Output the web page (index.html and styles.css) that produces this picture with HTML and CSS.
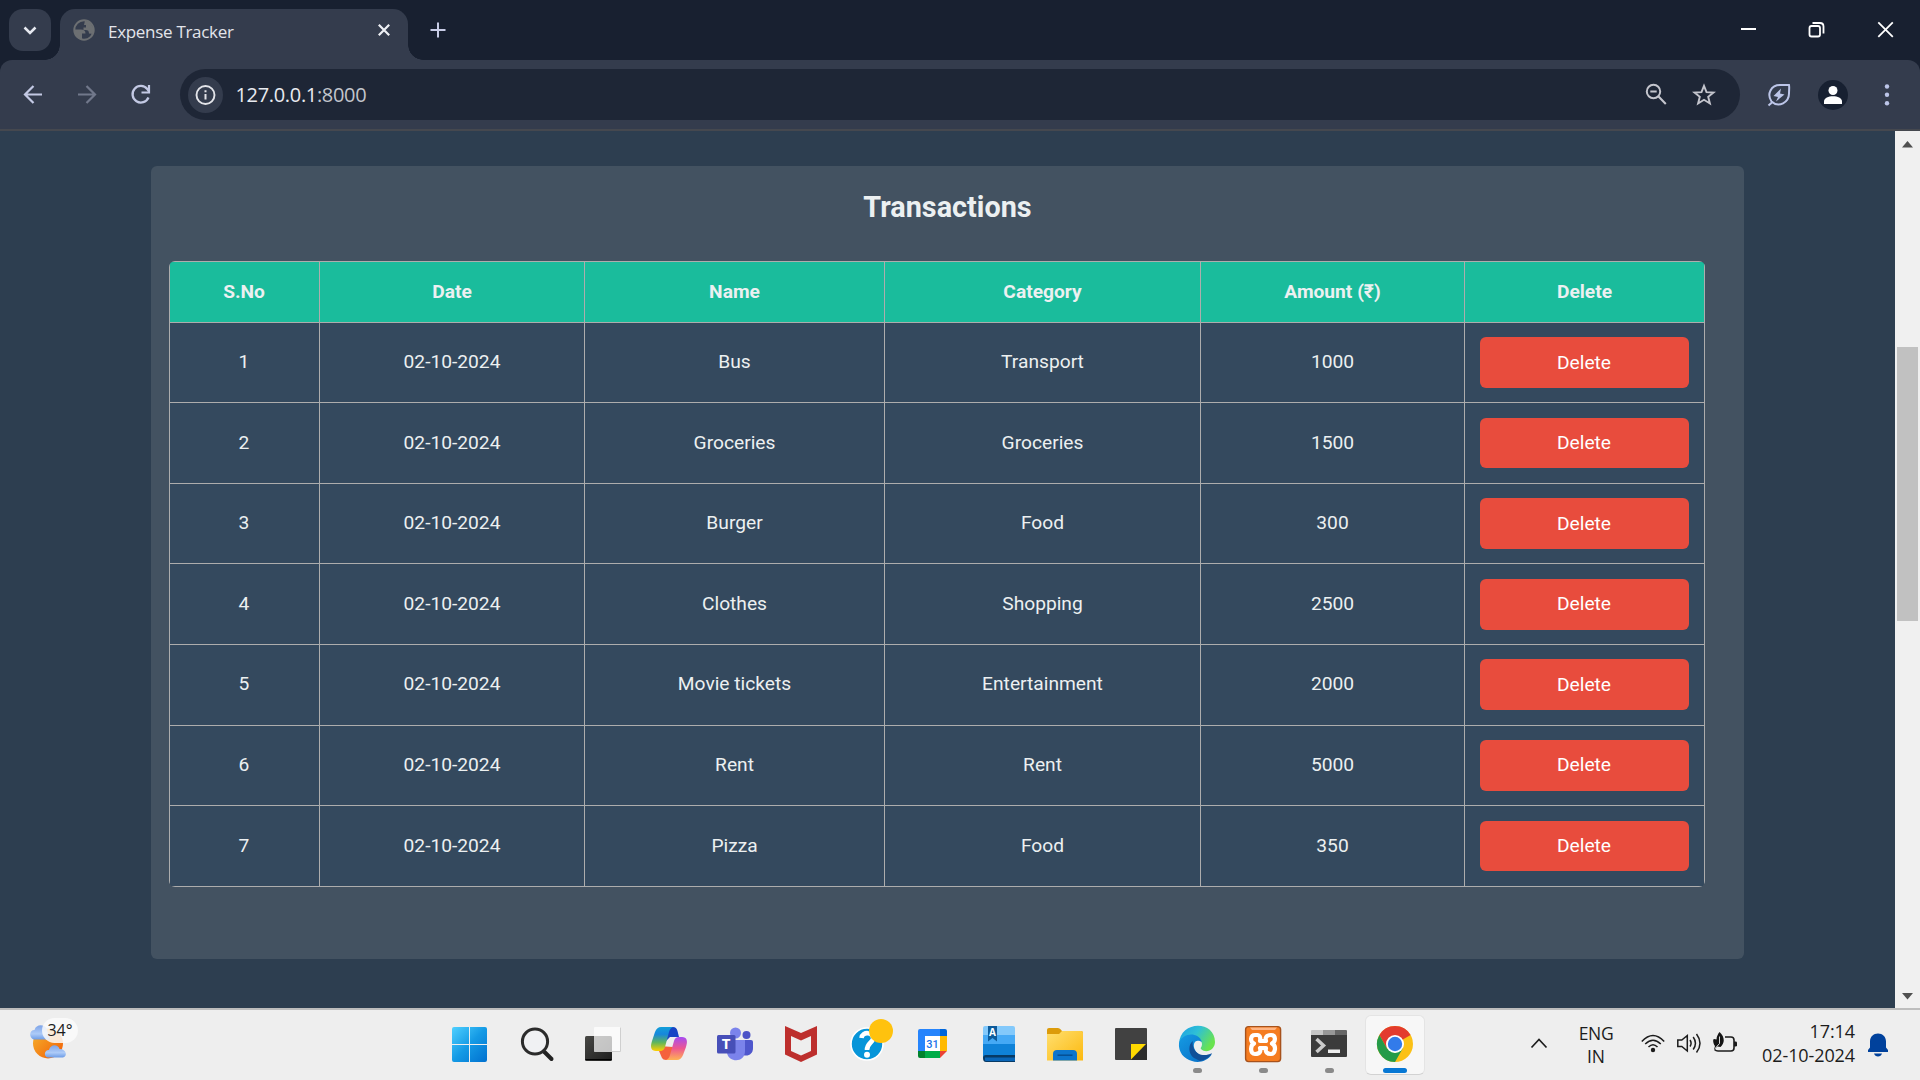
FILE: index.html
```html
<!DOCTYPE html>
<html lang="en">
<head>
<meta charset="utf-8">
<title>Expense Tracker</title>
<link rel="stylesheet" href="styles.css">
</head>
<body>
<div class="screen">
  <header class="tabstrip">
    <button class="tab-search"><svg width="42" height="42"><path d="M15.500 18.500l5.500 5.500l5.500-5.500" fill="none" stroke="#e6e9f0" stroke-width="2.500"/></svg></button>
    <div class="tab">
      <svg class="favicon" width="22" height="22" viewBox="0 0 22 22"><circle cx="11" cy="11" r="9.700" fill="none" stroke="#6c6f72" stroke-width="2"/><path d="M1.500 10.500H8c3 0 4.500 1.500 4.500 4H9v6C4 20 1 16 1.500 10.500zM12 1.500l5 2 4 6.500-1 5-4-.5c0-2.500-1-3.500-3.500-3.500h-2V8.500H13V6h-2z" fill="#6c6f72"/></svg>
      <span class="tab-title">Expense Tracker</span>
      <svg class="tab-close" width="12" height="12"><path d="M.8.8l10.400 10.400M11.200.8L.8 11.200" stroke="#eef0f5" stroke-width="2.200"/></svg>
    </div>
    <svg class="new-tab" width="16" height="16"><path d="M8 .5v15M.5 8h15" stroke="#c8cce6" stroke-width="2"/></svg>
    <div class="window-controls">
      <svg width="69" height="60"><path d="M28 29h15" stroke="#fff" stroke-width="2"/></svg>
      <svg width="69" height="60"><rect x="27.500" y="26" width="10.500" height="10.500" rx="2" fill="none" stroke="#fff" stroke-width="1.800"/><path d="M30.500 23h7.500q3.500 0 3.500 3.500v7" fill="none" stroke="#fff" stroke-width="1.800"/></svg>
      <svg width="69" height="60"><path d="M27.300 22.300l14.500 14.500M41.800 22.300L27.300 36.800" stroke="#fff" stroke-width="1.800"/></svg>
    </div>
  </header>
  <nav class="toolbar-wrap">
    <div class="toolbar">
      <svg class="nav-icon" width="54" height="69"><path d="M42 34.500H25.500M33.500 26l-8.500 8.500 8.500 8.500" fill="none" stroke="#c3c9e4" stroke-width="2.200"/></svg>
      <svg class="nav-icon" width="54" height="69"><path d="M24 34.500h16.500M32.500 26l8.500 8.500-8.500 8.500" fill="none" stroke="#71788b" stroke-width="2.200"/></svg>
      <svg class="reload" width="72" height="69"><path d="M40.500 37.500a8.300 8.300 0 1 1-1.200-8.500l1.500 2" fill="none" stroke="#c3c9e4" stroke-width="2.300"/><path d="M41 25v7.500h-7.500" fill="none" stroke="#c3c9e4" stroke-width="2.200"/></svg>
      <div class="omnibox">
        <span class="site-info"><svg width="35" height="36"><circle cx="17.500" cy="18" r="9" fill="none" stroke="#e3e4e9" stroke-width="1.900"/><path d="M17.500 13.200v2M17.500 17v5.500" stroke="#e3e4e9" stroke-width="2"/></svg></span>
        <span class="url"><span class="url-host">127.0.0.1</span><span class="url-port">:8000</span></span>
        <svg class="zoom-icon" width="24" height="24"><circle cx="9.500" cy="8.500" r="6.700" fill="none" stroke="#c4c5cd" stroke-width="2"/><path d="M6.300 8.500h6.400M14.300 13.300l7.500 7.700" stroke="#c4c5cd" stroke-width="2.100"/></svg>
        <svg width="24" height="24"><path d="M12 2.800l2.500 6.300 7 .4-5.300 4.300 1.700 6.700-5.900-3.700-5.900 3.700 1.700-6.700L2.500 9.500l7-.4z" fill="none" stroke="#c4c5cd" stroke-width="1.900"/></svg>
      </div>
      <svg class="leaf" width="24" height="24"><path d="M1.500 22.500l4-3.500" stroke="#bcc5e8" stroke-width="2"/><path d="M4.500 18.500C-.5 11 4 2 13 2h9c.5 2 0 5 0 8.500C22 19 12 25.500 4.500 18.500z" fill="none" stroke="#bcc5e8" stroke-width="2"/><path d="M14 5.500L6.500 13l4.500 1-2 4.500 8.500-7-4.500-1z" fill="#bcc5e8"/></svg>
      <svg class="avatar" width="30" height="30"><circle cx="15" cy="15" r="15" fill="#172031"/><circle cx="15" cy="10.500" r="4.500" fill="#fff"/><path d="M6 24v-2.500c0-7 18-7 18 0V24z" fill="#fff"/></svg>
      <svg class="menu-dots" width="6" height="24"><g fill="#bcc5e8"><circle cx="3" cy="3.500" r="2.200"/><circle cx="3" cy="11.800" r="2.200"/><circle cx="3" cy="20.200" r="2.200"/></g></svg>
    </div>
  </nav>
  <div class="viewport">
    <main class="page">
      <section class="panel">
        <h2>Transactions</h2>
        <div class="table-clip">
        <table>
          <colgroup><col class="c-no"><col class="c-date"><col class="c-name"><col class="c-cat"><col class="c-amt"><col class="c-del"></colgroup>
          <thead><tr><th>S.No</th><th>Date</th><th>Name</th><th>Category</th><th>Amount (₹)</th><th>Delete</th></tr></thead>
          <tbody>
            <tr><td>1</td><td>02-10-2024</td><td>Bus</td><td>Transport</td><td>1000</td><td><button class="delete">Delete</button></td></tr>
            <tr><td>2</td><td>02-10-2024</td><td>Groceries</td><td>Groceries</td><td>1500</td><td><button class="delete">Delete</button></td></tr>
            <tr><td>3</td><td>02-10-2024</td><td>Burger</td><td>Food</td><td>300</td><td><button class="delete">Delete</button></td></tr>
            <tr><td>4</td><td>02-10-2024</td><td>Clothes</td><td>Shopping</td><td>2500</td><td><button class="delete">Delete</button></td></tr>
            <tr><td>5</td><td>02-10-2024</td><td>Movie tickets</td><td>Entertainment</td><td>2000</td><td><button class="delete">Delete</button></td></tr>
            <tr><td>6</td><td>02-10-2024</td><td>Rent</td><td>Rent</td><td>5000</td><td><button class="delete">Delete</button></td></tr>
            <tr><td>7</td><td>02-10-2024</td><td>Pizza</td><td>Food</td><td>350</td><td><button class="delete">Delete</button></td></tr>
          </tbody>
        </table>
        </div>
      </section>
    </main>
    <div class="scrollbar">
      <svg width="25" height="26"><path d="M7 16.500h11L12.500 10z" fill="#505050"/></svg>
      <div class="track"><div class="thumb"></div></div>
      <svg width="25" height="26"><path d="M7 11h11l-5.500 6.500z" fill="#505050"/></svg>
    </div>
  </div>
  <footer class="taskbar">
    <div class="weather">
      <svg width="50" height="50" viewBox="0 0 50 50">
        <defs><linearGradient id="sun" x1="0" y1="0" x2="1" y2="1"><stop offset="0" stop-color="#f5b52e"/><stop offset="1" stop-color="#f25c05"/></linearGradient>
        <linearGradient id="cloud" x1="0" y1="0" x2="0" y2="1"><stop offset="0" stop-color="#7ea4e8"/><stop offset=".6" stop-color="#adcbf8"/><stop offset="1" stop-color="#6d9ce6"/></linearGradient></defs>
        <circle cx="18" cy="24.500" r="15" fill="url(#sun)"/>
        <path d="M3.500 20.500C-2 17.500 0 11 4.500 11 6 5 14 5 16.500 9.500L20 20.500z" fill="url(#cloud)"/>
        <path d="M18 38.500c-5-1-3.500-8 1-7.500 1.500-6 9-6 10.500-1 6-.5 9 7 3.500 8.500z" fill="url(#cloud)"/>
      </svg>
      <span class="temp">34°</span>
    </div>
    <div class="apps">
      <svg width="66" height="70"><defs><linearGradient id="win" x1="15" y1="17" x2="50" y2="52" gradientUnits="userSpaceOnUse"><stop offset="0" stop-color="#4fd0ff"/><stop offset=".5" stop-color="#149ae5"/><stop offset="1" stop-color="#0070cf"/></linearGradient></defs><path d="M17 17h15v17H15V19q0-2 2-2zM33 17h15q2 0 2 2v15H33zM15 35h17v17H17q-2 0-2-2zM33 35h17v15q0 2-2 2H33z" fill="url(#win)"/></svg>
      <svg width="66" height="70"><path d="M40.500 42l7 7" stroke="#222" stroke-width="4" stroke-linecap="round"/><circle cx="31" cy="31.500" r="12.600" fill="#f0f1f3" stroke="#2b2b2b" stroke-width="3"/></svg>
      <svg width="66" height="70"><defs><linearGradient id="tvd" x1="0" y1="0" x2="1" y2="1"><stop offset="0" stop-color="#484845"/><stop offset="1" stop-color="#1d1d1d"/></linearGradient></defs><rect x="15" y="26" width="27" height="25" rx="1.500" fill="url(#tvd)"/><path d="M15.500 49.500h26" stroke="#000"/><rect x="24" y="17" width="27" height="25" rx="1" fill="#fff" opacity=".72"/><path d="M24.500 41.500h26v-24" fill="none" stroke="#c4c4c4" stroke-width=".8"/></svg>
      <svg width="66" height="70"><defs><linearGradient id="cpa" x1="0" y1="0" x2="0" y2="1"><stop offset="0" stop-color="#139fd9"/><stop offset=".3" stop-color="#1687dc"/><stop offset=".65" stop-color="#61b65b"/><stop offset="1" stop-color="#ffd000"/></linearGradient><linearGradient id="cpb" x1="0" y1="0" x2="0" y2="1"><stop offset="0" stop-color="#a64bf2"/><stop offset=".5" stop-color="#ee5790"/><stop offset="1" stop-color="#ffb254"/></linearGradient></defs><path d="M32 17h5q3.500 0 4.500 4l1.500 6h-9l-5 5z" fill="#1745c5"/><path d="M23 36v5l3 7q1 2 4 2h6l1-13z" fill="#f5613c"/><path d="M25 17h12q-3 1-4 5l-4 15q-1 4-5 4h-4c-5 0-6-4-4-10l3-9q2-5 6-5z" fill="url(#cpa)"/><path d="M41 50H30q3-1 4-5l4-14q1-4 5-4h3c5 0 6 4 4 10l-3 8q-2 5-6 5z" fill="url(#cpb)"/></svg>
      <svg width="66" height="70"><circle cx="44.500" cy="25" r="4" fill="#4c53c7"/><path d="M38 30h11q2 0 2 2v6c0 6-5 9-10 7z" fill="#4f57cc"/><circle cx="33.500" cy="23" r="5.500" fill="#7b83eb"/><path d="M25 30h18v11c0 12-16 12-18 2z" fill="#7b83eb"/><rect x="15" y="25" width="18.500" height="18.500" rx="1.500" fill="#474fb8"/><text class="teams-t" x="24" y="39" text-anchor="middle">T</text></svg>
      <svg width="66" height="70"><path d="M17 16l16 7 16-7v28.500L33 52l-16-7.500zM23 26v15l10 4.500L43 41V26l-10 4.500z" fill="#bd2f2d" fill-rule="evenodd"/></svg>
      <svg width="66" height="70"><circle cx="33" cy="34" r="16" fill="#0795d9" stroke="#fff" stroke-width="1.600"/><path d="M27.500 28c1-7 12-6 11.500.5C38.500 33 33 33 33 40" fill="none" stroke="#fff" stroke-width="4.600"/><circle cx="33" cy="44.800" r="3" fill="#fff"/><circle cx="47" cy="21" r="12" fill="#ffc20e"/></svg>
      <svg width="66" height="70"><path d="M18 21q0-2 2-2h20v7H25v15h-7z" fill="#2684fc"/><path d="M40 19h5q2 0 2 2v5h-7z" fill="#0066da"/><path d="M40 26h7v15h-7z" fill="#ffba00"/><path d="M18 41h7v7h-5q-2 0-2-2z" fill="#00832d"/><path d="M25 41h15v7H25z" fill="#00ac47"/><path d="M40 41h7l-7 7z" fill="#ea4335"/><path d="M25 26h15v15H25z" fill="#fff"/><text class="cal-day" x="32.500" y="37.500" text-anchor="middle">31</text></svg>
      <svg width="66" height="70"><path d="M19 16h28q2 0 2 2v8H17v-8q0-2 2-2z" fill="#83c9fb"/><path d="M17 25h32v9H17z" fill="#45a9f5"/><path d="M17 34h32v14H17z" fill="#0f82d8"/><path d="M17 48q0-3 3-3h29v7H20q-3 0-3-4z" fill="#073a65"/><path d="M19 47.500h30v3.500H20q-1.500 0-1-3.500z" fill="#0965b7"/><path d="M22 16h9v15.500l-4.500-3.500-4.500 3.500z" fill="#0c5b9b"/><text class="book-a" x="26.500" y="25.500" text-anchor="middle">A</text></svg>
      <svg width="66" height="70"><defs><linearGradient id="fold" x1="0" y1="0" x2="1" y2="1"><stop offset="0" stop-color="#ffdf70"/><stop offset="1" stop-color="#fcb90f"/></linearGradient></defs><path d="M15 20q0-2 2-2h9q2 0 4 3h19q2 0 2 2v4H15z" fill="#dc9b0a"/><path d="M15 24h12l3-3h19q2 0 2 2v27.500H15z" fill="url(#fold)"/><path d="M21 50.500V44q0-4 4-4h16q4 0 4 4v6.500z" fill="#0c75cc"/><path d="M25.500 45.200h15" stroke="#064f93" stroke-width="1.500"/></svg>
      <svg width="66" height="70"><rect x="17" y="18" width="32" height="32" rx="1" fill="#414141"/><path d="M33 34h16v16H33z" fill="#2c2c2c"/><path d="M33 34h15L33 49.500z" fill="#ffd900"/></svg>
      <div class="app-open"><svg width="66" height="70"><defs><linearGradient id="edg" x1="0" y1="0" x2="1" y2=".5"><stop offset="0" stop-color="#1a9de5"/><stop offset=".5" stop-color="#2fc0d6"/><stop offset="1" stop-color="#69e34f"/></linearGradient><linearGradient id="edb" x1="0" y1="0" x2="1" y2="1"><stop offset="0" stop-color="#159be3"/><stop offset="1" stop-color="#086bc4"/></linearGradient></defs><path d="M15 34C16 10 51 10 51 32c0 8-9 12-14 7-1-1 1-2 1-5C37 24 20 23 15 34z" fill="url(#edg)"/><path d="M15 33c3-10 19-12 23-1-7-4-10 2-7 8 3 7 12 8 17 4-5 8-14 9-20 7C20 49 14 42 15 33z" fill="url(#edb)"/><path d="M29 31c-5 3-5 13 1 17 4 2 6 3 6 3 5-1 10-4 12-8-7 4-15 2-18-4-1-3-2-5-1-8z" fill="#114f98"/></svg></div>
      <div class="app-open"><svg width="66" height="70"><rect x="15.600" y="16.600" width="35" height="35" rx="3" fill="#f57c20" stroke="#a7521c" stroke-width="1.400"/><path d="M20 17.500h27l-2 2.500H22z" fill="#ffb584"/><path d="M28 25h-3c-5 0-5 7-1 8.500-4 2-4 10.500 1 10.500s6-2.500 5-6h6c-1 4 1 6 5 6s6-8 1-10.500c4-2 4-8.500-1-8.500s-6 3-5 6h-6c1-4-1-6-2-6z" fill="none" stroke="#fff" stroke-width="4.200" stroke-linejoin="round"/></svg></div>
      <div class="app-open"><svg width="66" height="70"><path d="M15 21q0-1 1-1h11v5H15z" fill="#c6c6c6"/><path d="M27 20h12v5H27z" fill="#979797"/><path d="M39 20h11q1 0 1 1v4H39z" fill="#666"/><path d="M15 25h36v21q0 1-1 1H16q-1 0-1-1z" fill="#3b3b3b"/><path d="M20.500 29l7 6.500-7 6.500" fill="none" stroke="#ccc" stroke-width="3.500"/><path d="M32 39.500h12v3.500H32z" fill="#eee"/></svg></div>
      <div class="app-open app-active"><svg width="66" height="70"><circle cx="33" cy="34" r="18" fill="#fbc116"/><path d="M33 34L17.410 25A18 18 0 0 1 48.590 25z" fill="#e33b2e"/><path d="M25 38.500L17.400 25 33 25z" fill="#e33b2e"/><path d="M25 38.500L17.400 25A18 18 0 0 0 33 52l8-14-8 5z" fill="#259b49"/><circle cx="33" cy="34" r="9" fill="#fff"/><circle cx="33" cy="34" r="7.200" fill="#327bea"/></svg></div>
    </div>
    <div class="tray">
      <svg width="18" height="12"><path d="M1.500 10.500L9 2.500l7.500 8" fill="none" stroke="#1c1c1c" stroke-width="1.700"/></svg>
      <div class="lang"><span class="eng">ENG</span><span>IN</span></div>
      <svg class="wifi" width="24" height="24"><g fill="none" stroke="#1c1c1c" stroke-width="1.500"><path d="M.8 9.500Q12-2.500 23.200 9.500M4.200 12Q12 4.500 19.800 12M7.500 15Q12 10.500 16.500 15"/></g><circle cx="12" cy="18" r="2.200" fill="#1c1c1c"/></svg>
      <svg class="vol" width="24" height="24"><g fill="none" stroke="#1c1c1c" stroke-width="1.500"><path d="M.8 9v6.500h4l5.500 4.500V4.500L4.800 9zM13 9q2.200 3.200 0 6.500M16.200 6q4.500 6.200 0 12.500M19.500 3q7 9.200 0 18.500"/></g></svg>
      <svg class="bat" width="24" height="24"><path d="M12 7h6q3 0 3 3v8q0 3-3 3H5q-2 0-3.500-1.500" fill="none" stroke="#1c1c1c" stroke-width="1.600"/><path d="M21 11.500h1.500q1.500 0 1.500 1.200v2.600q0 1.200-1.500 1.200H21z" fill="#1c1c1c"/><path d="M6.500 2c5.500 5 5.500 11 1 15l-3-.5L1 19.500l1-3.500C-.5 12.500 0 9 1 9l2.500.5C3.500 6.500 5 4 6.500 2z" fill="#151515"/><path d="M6.500 6.500v7L2.500 18" fill="none" stroke="#eee" stroke-width=".9"/></svg>
      <div class="clock"><span class="time">17:14</span><span class="date">02-10-2024</span></div>
      <svg class="bell" width="20" height="24"><path d="M0 18v-1l2-2.500V8.500C2 3.500 5.500.500 10 .500s8 3 8 8v6l2 2.500v2H0zM6 20.500h8q-1 3-4 3t-4-3z" fill="#00419c"/></svg>
    </div>
  </footer>
</div>
</body>
</html>
```
FILE: styles.css
```css
* { box-sizing: border-box; }
body { margin: 0; font-family: "Open Sans", "Noto Sans", sans-serif; }
svg { display: block; flex: none; }
button { border: 0; padding: 0; }
.screen { width: 1920px; height: 1080px; overflow: hidden; display: flex; flex-direction: column; background: #2d3e50; }

/* Tab strip */
.tabstrip { height: 60px; flex: none; display: flex; align-items: flex-start; background: #182030; padding-left: 9px; }
.tab-search { width: 42px; height: 42px; margin-top: 9px; border-radius: 14px; background: #343c4d; }
.tab { position: relative; width: 348px; height: 51px; margin: 9px 0 0 9px; border-radius: 15px 15px 0 0; background: #343c4d; display: flex; align-items: center; padding: 0 18px 9px 13px; }
.tab::before, .tab::after { content: ""; position: absolute; bottom: 0; width: 15px; height: 15px; }
.tab::before { left: -15px; background: radial-gradient(circle at 0 0, transparent 14.500px, #343c4d 15px); }
.tab::after { right: -15px; background: radial-gradient(circle at 100% 0, transparent 14.500px, #343c4d 15px); }
.tab-title { margin-left: 13px; padding-top: 2px; font-size: 17px; letter-spacing: -.3px; color: #e3e5eb; }
.tab-close { margin-left: auto; }
.new-tab { margin: 22px 0 0 22px; }
.window-controls { margin-left: auto; display: flex; }

/* Toolbar */
.toolbar-wrap { height: 71px; flex: none; background: #182030; border-bottom: 2px solid #45484f; }
.toolbar { height: 69px; background: #343c4d; border-radius: 12px 12px 0 0; display: flex; align-items: center; }
.omnibox { width: 1560px; height: 51px; border-radius: 26px; background: #1e2636; display: flex; align-items: center; padding: 0 24px 0 8px; }
.site-info { width: 35px; height: 36px; border-radius: 50%; background: #343c4d; }
.url { margin-left: 12.500px; font-size: 20px; letter-spacing: -.330px; line-height: 30px; color: #e8eaf0; }
.url-port { color: #c3c5cc; }
.zoom-icon { margin: 0 24px 0 auto; }
.leaf { margin-left: 27px; }
.avatar { margin-left: 27px; }
.menu-dots { margin-left: 36px; }

/* Page */
.viewport { height: 877px; flex: none; display: flex; }
.page { width: 1895px; padding: 35px 151px 0; background: #2d3e50; font-family: Roboto, sans-serif; color: #ecf0f1; }
.panel { width: 1593px; height: 793px; padding: 24px 39px 0 18px; border-radius: 6px; background: #435261; }
h2 { margin: 0 -21px 37px 0; font-size: 28.800px; line-height: 34px; text-align: center; font-weight: 700; }
.table-clip { width: 1536px; border-radius: 6px; overflow: hidden; }
table { width: 1535px; table-layout: fixed; border-collapse: collapse; font-size: 19.200px; text-align: center; background: #34495e; }
.c-no { width: 150px; } .c-date { width: 265px; } .c-name { width: 300px; } .c-cat { width: 316px; } .c-amt { width: 264px; } .c-del { width: 240px; }
th, td { border: 1px solid #adadad; padding: 0 15px; line-height: 22px; }
th { height: 60.700px; background: #1abc9c; font-weight: 700; }
td { height: 80.571px; padding-bottom: .600px; }
th:first-child, td:first-child { padding-right: 16px; }
td:last-child { padding-bottom: 0; }
.delete { display: block; width: 209px; height: 50.700px; padding: 0 1px .700px 0; border-radius: 6px; background: #e84c3d; color: #fff; font: 19.200px Roboto, sans-serif; }

/* Scrollbar */
.scrollbar { width: 25px; background: #f0f0f0; display: flex; flex-direction: column; }
.track { flex: 1; padding: 190px 2px 0; }
.thumb { height: 274px; background: #c1c1c1; }

/* Taskbar */
.taskbar { height: 72px; flex: none; display: flex; background: #eee; border-top: 2px solid #bdbdbd; color: #1c1c1c; }
.weather { position: relative; width: 437px; padding: 9px 0 0 30px; }
.temp { position: absolute; left: 42px; top: 8px; width: 36px; height: 25px; border-radius: 13px; background: rgba(250, 250, 250, .85); font-size: 16px; line-height: 24px; text-align: center; letter-spacing: -.1px; }
.apps { display: flex; width: 992px; }
.apps > * { width: 66px; }
.apps > :first-child { margin-right: 1px; }
.app-open { position: relative; height: 70px; }
.app-open svg { position: relative; }
.app-open::after { content: ""; position: absolute; left: 28.500px; top: 58px; width: 9px; height: 5px; border-radius: 3px; background: #8a8a8a; }
.app-active::before { content: ""; position: absolute; left: 3px; top: 5px; width: 58px; height: 58px; border-radius: 6px; background: #f7f7f7; border: 1px solid #e4e4e4; border-bottom-color: #d2d2d2; }
.app-active::after { left: 21px; width: 24px; background: #0878d4; }
.teams-t { font: 700 15px "Open Sans", sans-serif; fill: #fff; }
.cal-day { font: 500 11px Roboto, sans-serif; fill: #1a73e8; }
.book-a { font: 700 10px "Open Sans", sans-serif; fill: #fff; }
.tray { display: flex; align-items: flex-start; padding-left: 101px; }
.tray > svg:first-child { margin-top: 27px; }
.lang { width: 60px; margin: 12px 0 0 18px; display: flex; flex-direction: column; align-items: center; font-size: 17.500px; line-height: 23px; }
.eng { letter-spacing: -.3px; }
.wifi { margin: 22px 0 0 15px; }
.vol { margin: 21px 0 0 12px; }
.bat { margin: 20px 0 0 12px; }
.clock { width: 110px; margin: 9px 0 0 8px; display: flex; flex-direction: column; align-items: flex-end; font-size: 18px; line-height: 24px; letter-spacing: -.1px; }
.bell { margin: 23px 0 0 13px; }
```
